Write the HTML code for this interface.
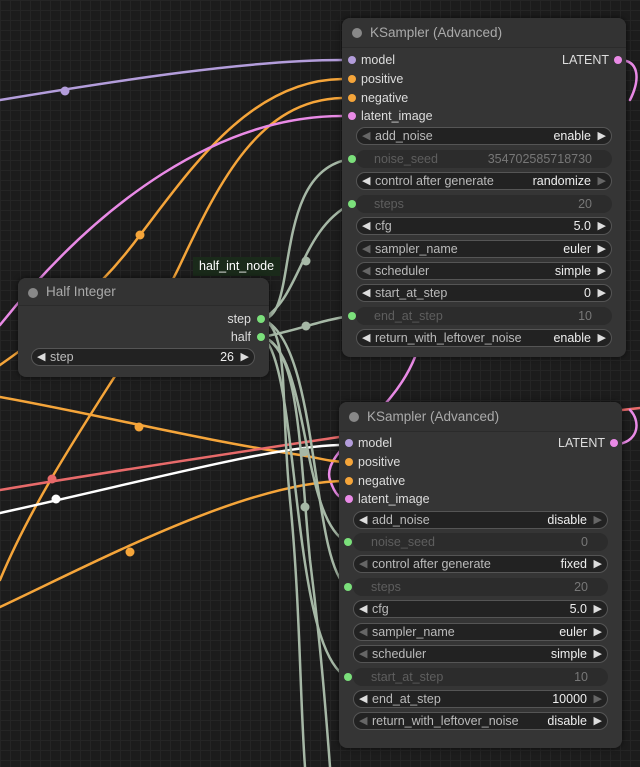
<!DOCTYPE html>
<html><head><meta charset="utf-8"><style>
*{margin:0;padding:0;box-sizing:border-box}
body{width:640px;height:767px;overflow:hidden;position:relative;font-family:"Liberation Sans",Arial,sans-serif;
background-color:#1c1c1c;
background-image:linear-gradient(#252525 1px,transparent 1px),linear-gradient(90deg,#252525 1px,transparent 1px);
background-size:10px 10px;}
svg.w{position:absolute;left:0;top:0}
.node{position:absolute;background:#353535;border-radius:8px;box-shadow:0 0 6px rgba(0,0,0,.6)}
.title{position:absolute;left:0;top:0;right:0;height:30px;background:#333;border-bottom:1px solid #2b2b2b;border-radius:8px 8px 0 0;color:#aaa;font-size:13.5px;line-height:30px;padding-left:28px}
.title:before{content:"";position:absolute;left:10px;top:10px;width:10px;height:10px;border-radius:50%;background:#888}
.s{position:absolute;font-size:12.5px;color:#ddd;line-height:14px}
.d{position:absolute;width:8px;height:8px;border-radius:50%}
.wg{position:absolute;height:18px;border-radius:9px;background:#222;border:1px solid #555;font-size:12.5px;color:#bbb;line-height:16px}
.wg .l{position:absolute;left:18px}
.wg .v{position:absolute;right:20px;color:#eee}
.wg .a1,.wg .a2{position:absolute;top:0;font-size:11px;color:#ddd}
.wg .a1{left:5px}.wg .a2{right:5px}
.wg .dim{color:#666}
.wd{position:absolute;height:18px;border-radius:9px;background:#2c2c2c;font-size:12.5px;color:#5e5e5e;line-height:18px}
.wd .l{position:absolute;left:18px}.wd .v{position:absolute;right:20px;color:#777}
</style></head><body>
<svg class="w" width="640" height="767" fill="none" stroke-linecap="round">
<path d="M0 100 C120 80 250 60 342 60" stroke="#b39ddb" stroke-width="2.5"/>
<path d="M342 79 C250 80 190 170 140 235 C100 290 50 330 0 365" stroke="#f5a53a" stroke-width="2.5"/>
<path d="M342 98 C260 100 220 180 180 265 C140 350 50 460 0 580" stroke="#f5a53a" stroke-width="2.5"/>
<path d="M342 116 C220 116 100 200 0 325" stroke="#e98ae6" stroke-width="2.5"/>
<path d="M619 60 C640 60 640 80 630 100" stroke="#e98ae6" stroke-width="2.5"/>
<path d="M415 357 C390 420 320 450 330 480 C335 495 340 499 348 499" stroke="#e98ae6" stroke-width="2.5"/>
<path d="M0 397 C100 415 200 440 300 455 C320 458 330 462 348 462" stroke="#f5a53a" stroke-width="2.5"/>
<path d="M0 607 C100 560 250 480 348 481" stroke="#f5a53a" stroke-width="2.5"/>
<path d="M0 490 C150 465 300 443 339 437 M622 410 L640 408" stroke="#e86a6a" stroke-width="2.5"/>
<path d="M0 513 C150 480 270 447 339 445" stroke="#fff" stroke-width="2.5"/>
<path d="M619 444 C640 440 640 420 630 410" stroke="#e98ae6" stroke-width="2.5"/>
<g stroke="#a6b8a6" stroke-width="2.5">
<path d="M262 319 C300 320 270 170 351 159"/>
<path d="M262 319 C300 300 300 230 351 204"/>
<path d="M262 337 C300 330 320 320 351 316"/>
<path d="M262 319 C290 330 280 400 290 500 C300 600 300 700 305 767"/>
<path d="M262 337 C300 345 300 460 310 560 C320 640 325 700 330 767"/>
<path d="M262 337 C310 350 300 520 347 542"/>
<path d="M262 319 C320 340 310 560 347 587"/>
<path d="M262 337 C300 360 290 650 347 677"/>
</g>
<g>
<circle cx="65" cy="91" r="4.5" fill="#b39ddb"/>
<circle cx="140" cy="235" r="4.5" fill="#f5a53a"/>
<circle cx="139" cy="427" r="4.5" fill="#f5a53a"/>
<circle cx="130" cy="552" r="4.5" fill="#f5a53a"/>
<circle cx="52" cy="479" r="4.5" fill="#e86a6a"/>
<circle cx="56" cy="499" r="4.5" fill="#fff"/>
<circle cx="306" cy="261" r="4.5" fill="#a6b8a6"/>
<circle cx="306" cy="326" r="4.5" fill="#a6b8a6"/>
<circle cx="304" cy="452" r="4.5" fill="#a6b8a6"/>
<circle cx="305" cy="507" r="4.5" fill="#a6b8a6"/>
</g>
</svg>

<div style="position:absolute;left:193px;top:257px;height:19px;padding:0 6px;background:#1a2a1a;color:#fff;font-size:12.5px;line-height:19px">half_int_node</div>
<div class="node" style="left:18px;top:278px;width:251px;height:99px">
<div class="title" style="height:28px;line-height:28px">Half Integer</div>
<div class="s" style="right:18px;top:34px">step</div><div class="d" style="right:4px;top:37px;background:#7be07b"></div>
<div class="s" style="right:18px;top:52px">half</div><div class="d" style="right:4px;top:55px;background:#7be07b"></div>
<div class="wg" style="left:13px;top:70px;width:224px"><span class="a1">◀</span><span class="l" style="left:18px">step</span><span class="v">26</span><span class="a2">▶</span></div>
</div>

<div class="node" style="left:342px;top:18px;width:284px;height:339px">
<div class="title">KSampler (Advanced)</div>
<div class="d" style="left:6px;top:38px;background:#b39ddb"></div><div class="s" style="left:19px;top:35px">model</div>
<div class="s" style="right:17px;top:35px">LATENT</div><div class="d" style="right:4px;top:38px;background:#e98ae6"></div>
<div class="d" style="left:6px;top:57px;background:#f5a53a"></div><div class="s" style="left:19px;top:54px">positive</div>
<div class="d" style="left:6px;top:76px;background:#f5a53a"></div><div class="s" style="left:19px;top:73px">negative</div>
<div class="d" style="left:6px;top:94px;background:#e98ae6"></div><div class="s" style="left:19px;top:91px">latent_image</div>
<div class="wg" style="left:14px;top:109px;width:256px"><span class="a1 dim">◀</span><span class="l">add_noise</span><span class="v">enable</span><span class="a2">▶</span></div>
<div class="d" style="left:6px;top:137px;background:#7be07b"></div>
<div class="wd" style="left:14px;top:132px;width:256px"><span class="l">noise_seed</span><span class="v">354702585718730</span></div>
<div class="wg" style="left:14px;top:154px;width:256px"><span class="a1">◀</span><span class="l">control after generate</span><span class="v">randomize</span><span class="a2 dim">▶</span></div>
<div class="d" style="left:6px;top:182px;background:#7be07b"></div>
<div class="wd" style="left:14px;top:177px;width:256px"><span class="l">steps</span><span class="v">20</span></div>
<div class="wg" style="left:14px;top:199px;width:256px"><span class="a1">◀</span><span class="l">cfg</span><span class="v">5.0</span><span class="a2">▶</span></div>
<div class="wg" style="left:14px;top:222px;width:256px"><span class="a1 dim">◀</span><span class="l">sampler_name</span><span class="v">euler</span><span class="a2">▶</span></div>
<div class="wg" style="left:14px;top:244px;width:256px"><span class="a1 dim">◀</span><span class="l">scheduler</span><span class="v">simple</span><span class="a2">▶</span></div>
<div class="wg" style="left:14px;top:266px;width:256px"><span class="a1">◀</span><span class="l">start_at_step</span><span class="v">0</span><span class="a2">▶</span></div>
<div class="d" style="left:6px;top:294px;background:#7be07b"></div>
<div class="wd" style="left:14px;top:289px;width:256px"><span class="l">end_at_step</span><span class="v">10</span></div>
<div class="wg" style="left:14px;top:311px;width:256px"><span class="a1">◀</span><span class="l">return_with_leftover_noise</span><span class="v">enable</span><span class="a2">▶</span></div>
</div>

<div class="node" style="left:339px;top:402px;width:283px;height:346px">
<div class="title">KSampler (Advanced)</div>
<div class="d" style="left:6px;top:37px;background:#b39ddb"></div><div class="s" style="left:19px;top:34px">model</div>
<div class="s" style="right:17px;top:34px">LATENT</div><div class="d" style="right:4px;top:37px;background:#e98ae6"></div>
<div class="d" style="left:6px;top:56px;background:#f5a53a"></div><div class="s" style="left:19px;top:53px">positive</div>
<div class="d" style="left:6px;top:75px;background:#f5a53a"></div><div class="s" style="left:19px;top:72px">negative</div>
<div class="d" style="left:6px;top:93px;background:#e98ae6"></div><div class="s" style="left:19px;top:90px">latent_image</div>
<div class="wg" style="left:14px;top:109px;width:255px"><span class="a1">◀</span><span class="l">add_noise</span><span class="v">disable</span><span class="a2 dim">▶</span></div>
<div class="d" style="left:5px;top:136px;background:#7be07b"></div>
<div class="wd" style="left:14px;top:131px;width:255px"><span class="l">noise_seed</span><span class="v">0</span></div>
<div class="wg" style="left:14px;top:153px;width:255px"><span class="a1 dim">◀</span><span class="l">control after generate</span><span class="v">fixed</span><span class="a2">▶</span></div>
<div class="d" style="left:5px;top:181px;background:#7be07b"></div>
<div class="wd" style="left:14px;top:176px;width:255px"><span class="l">steps</span><span class="v">20</span></div>
<div class="wg" style="left:14px;top:198px;width:255px"><span class="a1">◀</span><span class="l">cfg</span><span class="v">5.0</span><span class="a2">▶</span></div>
<div class="wg" style="left:14px;top:221px;width:255px"><span class="a1 dim">◀</span><span class="l">sampler_name</span><span class="v">euler</span><span class="a2">▶</span></div>
<div class="wg" style="left:14px;top:243px;width:255px"><span class="a1 dim">◀</span><span class="l">scheduler</span><span class="v">simple</span><span class="a2">▶</span></div>
<div class="d" style="left:5px;top:271px;background:#7be07b"></div>
<div class="wd" style="left:14px;top:266px;width:255px"><span class="l">start_at_step</span><span class="v">10</span></div>
<div class="wg" style="left:14px;top:288px;width:255px"><span class="a1">◀</span><span class="l">end_at_step</span><span class="v">10000</span><span class="a2 dim">▶</span></div>
<div class="wg" style="left:14px;top:310px;width:255px"><span class="a1 dim">◀</span><span class="l">return_with_leftover_noise</span><span class="v">disable</span><span class="a2">▶</span></div>
</div>
</body></html>
